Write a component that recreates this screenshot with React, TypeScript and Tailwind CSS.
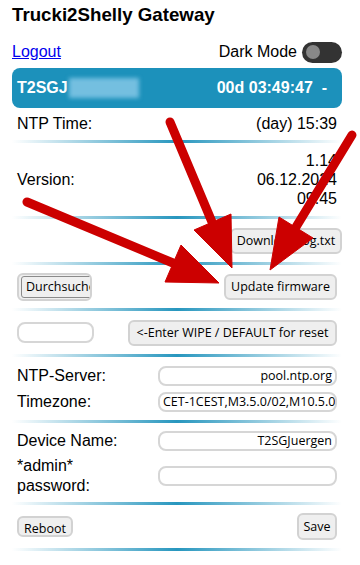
import React from "react";

const sans = { fontFamily: '"Liberation Sans", Arial, sans-serif' };
const ui = { fontFamily: '"Open Sans", "DejaVu Sans", sans-serif' };

function Sep() {
  return <div className="h-[3px] bg-linear-to-r from-[#1c91bb00] via-[#1c91bb] to-[#1c91bb00] opacity-95" />;
}

function Btn({ children, className = "" }: { children: React.ReactNode; className?: string }) {
  return (
    <button
      style={ui}
      className={`rounded-[6px] border-2 border-[#d2d2d2] bg-[#efefef] px-[4px] text-[12.5px] leading-[22px] text-black whitespace-nowrap ${className}`}
    >
      {children}
    </button>
  );
}

function Field({ value, left = false }: { value: string; left?: boolean }) {
  return (
    <div
      style={ui}
      className={`flex h-[20px] w-[179px] items-center overflow-hidden whitespace-nowrap rounded-[8px] border-2 border-[#d6d6d6] bg-white px-[3px] text-[12.5px] text-black ${
        left ? "justify-start" : "justify-end"
      }`}
    >
      {value}
    </div>
  );
}

function Arrows() {
  const arrows = [
    { x1: 170, y1: 122, bx: 212, by: 222, pts: "194,230 231,214 232,268" },
    { x1: 352, y1: 135, bx: 296, by: 227, pts: "313,238 279,217 270,270" },
    { x1: 27, y1: 202, bx: 173, by: 263, pts: "165,282 181,245 219,283" },
  ];
  return (
    <svg className="pointer-events-none absolute inset-0" width="360" height="565" viewBox="0 0 360 565">
      {arrows.map((a, i) => (
        <g key={i} fill="#cc0000" stroke="#cc0000">
          <line x1={a.x1} y1={a.y1} x2={a.bx} y2={a.by} strokeWidth={9} strokeLinecap="round" />
          <polygon points={a.pts} strokeWidth={1} strokeLinejoin="round" />
        </g>
      ))}
    </svg>
  );
}

export default function App() {
  return (
    <div className="relative h-[565px] w-[360px] overflow-hidden bg-white text-black" style={sans}>
      <div className="ml-[12px] w-[330px]">
        <h3 className="pt-[4px] text-[18.72px] font-bold leading-[22px]">Trucki2Shelly Gateway</h3>

        <div className="mt-[14px] flex h-[24px] items-center justify-between">
          <a href="#" className="text-[16px] text-[#0000ee] underline">
            Logout
          </a>
          <div className="flex items-center gap-[5px]">
            <span className="text-[16px]">Dark Mode</span>
            <span className="flex h-[21px] w-[40px] items-center rounded-full bg-[#333] px-[4px]">
              <span className="h-[14px] w-[14px] rounded-full bg-[#888]" />
            </span>
          </div>
        </div>

        <div className="mt-[4px] flex h-[40px] items-center justify-between rounded-[8px] bg-[#1c91bb] pl-[5px] pr-[15px] text-[16px] font-bold text-white">
          <div className="flex items-center">
            <span>T2SGJ</span>
            <span className="ml-[1px] h-[20px] w-[70px] bg-[#74bfe0] blur-[2px]" />
          </div>
          <span className="whitespace-pre">00d 03:49:47  -</span>
        </div>

        <div className="flex h-[32px] items-center justify-between px-[5px] text-[16px]">
          <span>NTP Time:</span>
          <span>(day) 15:39</span>
        </div>
        <Sep />

        <div className="flex h-[73px] items-center justify-between px-[5px] text-[16px]">
          <span>Version:</span>
          <div className="text-right leading-[19px]">
            <div>1.14</div>
            <div>06.12.2024</div>
            <div>09:45</div>
          </div>
        </div>
        <Sep />

        <div className="flex h-[43px] items-center justify-end">
          <Btn className="h-[26px] w-[112px]">Download log.txt</Btn>
        </div>
        <Sep />

        <div className="flex h-[43px] items-center justify-between px-[5px]">
          <div className="flex h-[28px] w-[75px] items-center overflow-hidden rounded-[6px] border-2 border-[#d2d2d2] bg-[#efefef] pl-[2px]">
            <span
              style={ui}
              className="rounded-[3px] border border-[#8a8a8a] bg-[#efefef] px-[4px] text-[12.5px] leading-[20px] whitespace-nowrap"
            >
              Durchsuchen
            </span>
          </div>
          <Btn className="h-[26px] w-[113px]">Update firmware</Btn>
        </div>
        <Sep />

        <div className="flex h-[43px] items-center justify-between px-[5px]">
          <div className="h-[21px] w-[77px] rounded-[8px] border-2 border-[#d6d6d6] bg-white" />
          <Btn className="h-[26px] w-[209px]">{"<-Enter WIPE / DEFAULT for reset"}</Btn>
        </div>
        <Sep />

        <div className="flex flex-col gap-[6px] px-[5px] pb-[8px] pt-[9px] text-[16px] leading-[20px]">
          <div className="flex items-center justify-between">
            <span>NTP-Server:</span>
            <Field value="pool.ntp.org" />
          </div>
          <div className="flex items-center justify-between">
            <span>Timezone:</span>
            <Field value="CET-1CEST,M3.5.0/02,M10.5.0/03" left />
          </div>
        </div>
        <Sep />

        <div className="flex flex-col gap-[5px] px-[5px] pb-[6px] pt-[8px] text-[16px] leading-[20px]">
          <div className="flex items-center justify-between">
            <span>Device Name:</span>
            <Field value="T2SGJuergen" />
          </div>
          <div className="flex items-center justify-between">
            <span>
              *admin*
              <br />
              password:
            </span>
            <Field value="" />
          </div>
        </div>
        <Sep />

        <div className="flex h-[43px] items-center justify-between px-[5px]">
          <Btn className="h-[21px] w-[56px] leading-[17px] px-[2px]">Reboot</Btn>
          <Btn className="h-[27px] w-[40px] px-[2px]">Save</Btn>
        </div>
        <Sep />
      </div>
      <Arrows />
    </div>
  );
}
